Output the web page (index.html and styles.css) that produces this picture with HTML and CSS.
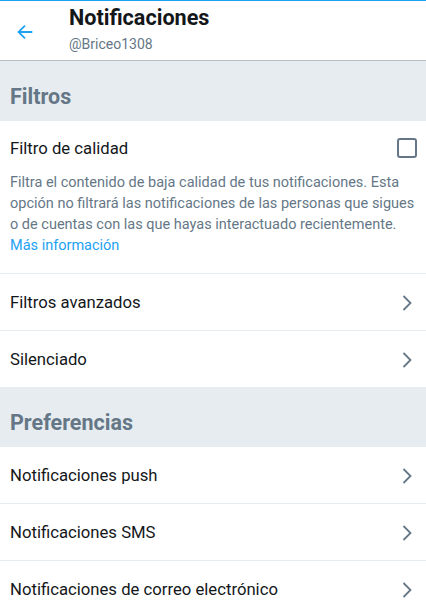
FILE: index.html
```html
<!DOCTYPE html>
<html lang="es">
<head>
<meta charset="utf-8">
<title>Notificaciones</title>
<link rel="stylesheet" href="styles.css">
</head>
<body>
<header class="topbar">
  <div class="back">
    <svg width="22" height="22" viewBox="0 0 24 24"><path d="M20 11H7.4l5.3-5.3-1.4-1.4L3.6 12l7.7 7.7 1.4-1.4L7.4 13H20z" fill="#1da1f2"/></svg>
  </div>
  <div class="titles">
    <div class="title">Notificaciones</div>
    <div class="user">@Briceo1308</div>
  </div>
</header>
<main>
  <div class="section-head">Filtros</div>
  <div class="quality">
    <div class="quality-top">
      <span class="label">Filtro de calidad</span>
      <span class="checkbox"></span>
    </div>
    <p class="desc">Filtra el contenido de baja calidad de tus notificaciones. Esta opción no filtrará las notificaciones de las personas que sigues o de cuentas con las que hayas interactuado recientemente.<br><a class="link" href="#">Más información</a></p>
  </div>
  <div class="row"><span class="label">Filtros avanzados</span><svg class="chev" width="12" height="18" viewBox="0 0 12 18"><path d="M2.5 2l7 7-7 7" fill="none" stroke="#657786" stroke-width="1.8"/></svg></div>
  <div class="row last"><span class="label">Silenciado</span><svg class="chev" width="12" height="18" viewBox="0 0 12 18"><path d="M2.5 2l7 7-7 7" fill="none" stroke="#657786" stroke-width="1.8"/></svg></div>
  <div class="section-head">Preferencias</div>
  <div class="row"><span class="label">Notificaciones push</span><svg class="chev" width="12" height="18" viewBox="0 0 12 18"><path d="M2.5 2l7 7-7 7" fill="none" stroke="#657786" stroke-width="1.8"/></svg></div>
  <div class="row"><span class="label">Notificaciones SMS</span><svg class="chev" width="12" height="18" viewBox="0 0 12 18"><path d="M2.5 2l7 7-7 7" fill="none" stroke="#657786" stroke-width="1.8"/></svg></div>
  <div class="row"><span class="label">Notificaciones de correo electrónico</span><svg class="chev" width="12" height="18" viewBox="0 0 12 18"><path d="M2.5 2l7 7-7 7" fill="none" stroke="#657786" stroke-width="1.8"/></svg></div>
</main>
</body>
</html>
```
FILE: styles.css
```css
* { box-sizing: border-box; }
html, body { margin: 0; padding: 0; }
body {
  font-family: Roboto, "Noto Sans", sans-serif;
  background: #fff;
  color: #14171a;
  width: 426px;
  height: 614px;
  overflow: hidden;
}
.topbar {
  height: 61px;
  border-top: 1px solid #1da1f2;
  border-bottom: 1px solid #b8bfc4;
  display: flex;
  align-items: center;
}
.back {
  width: 69px;
  padding-left: 14px;
  display: flex;
  align-items: center;
  padding-top: 2px;
}
.titles { display: flex; flex-direction: column; padding-bottom: 1px; }
.title { font-size: 21.6px; font-weight: 700; line-height: 24px; color: #14171a; }
.user { font-size: 14px; line-height: 20px; color: #657786; margin-top: 4px; }
.section-head {
  height: 60px;
  background: #e6ecf0;
  font-size: 21.5px;
  font-weight: 700;
  color: #657786;
  padding: 10px 0 0 10px;
  display: flex;
  align-items: center;
}
.label { font-size: 16.7px; color: #14171a; }
.quality {
  padding: 15px 9px 17px 10px;
  border-bottom: 1px solid #e6ecf0;
}
.quality-top {
  display: flex;
  justify-content: space-between;
  align-items: center;
  height: 24px;
}
.checkbox {
  width: 20px;
  height: 20px;
  border: 2px solid #657786;
  border-radius: 3px;
}
.desc {
  margin: 12px 0 0;
  font-size: 14.5px;
  line-height: 21px;
  color: #657786;
}
.link { color: #1da1f2; text-decoration: none; }
.row {
  height: 57px;
  border-bottom: 1px solid #e6ecf0;
  display: flex;
  align-items: center;
  justify-content: space-between;
  padding: 1px 13px 0 10px;
}
.row.last { border-bottom: none; height: 56px; }
.chev { display: block; }
```
